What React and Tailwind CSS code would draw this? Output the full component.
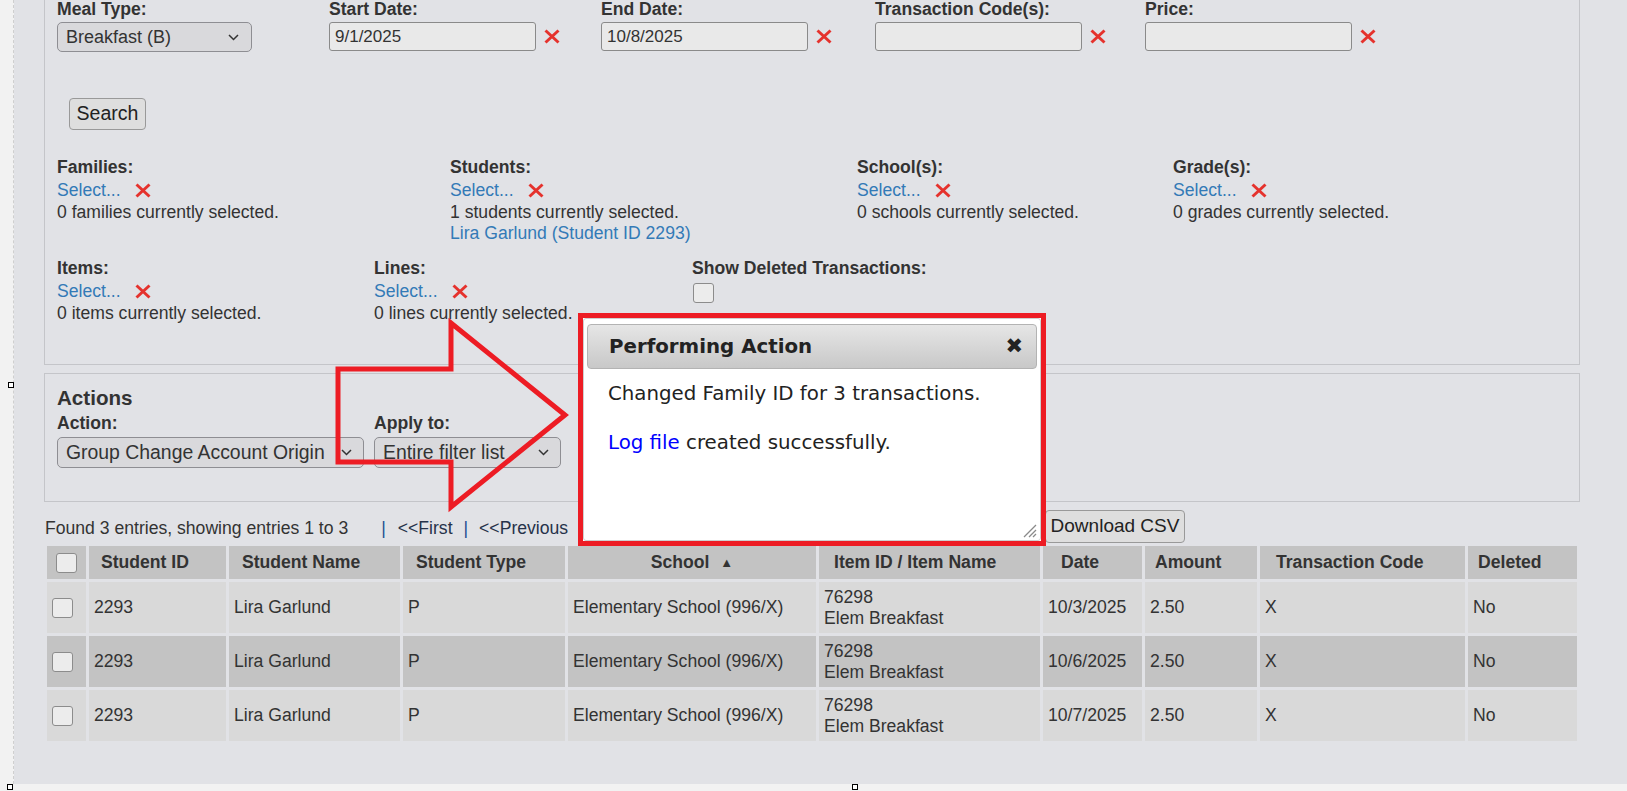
import React from 'react';

const RedX = () => (
  <svg width="18" height="15" viewBox="0 0 18 15" className="shrink-0">
    <path d="M2.5 1.5 L15.5 13.5 M15.5 1.5 L2.5 13.5" stroke="#e5322d" strokeWidth="3" fill="none" />
  </svg>
);

const Chevron = () => (
  <svg width="11" height="7" viewBox="0 0 11 7" className="shrink-0">
    <path d="M1 1 L5.5 5.5 L10 1" stroke="#333" strokeWidth="1.5" fill="none" />
  </svg>
);

const Box = ({ className = '' }) => (
  <span className={`block h-[20px] w-[21px] rounded-[3px] border border-[#8c8c8c] bg-[#ececec] ${className}`} />
);

function DateField({ label, value, width }) {
  return (
    <div className={width}>
      <div className="font-bold leading-[19px]">{label}</div>
      <div className="mt-[3px] flex items-center gap-[7px]">
        <div className="flex h-[29px] w-[207px] items-center rounded-[3px] border border-[#8a8a8a] bg-[#e9e9e9] pl-[5px] text-[17px]">
          {value}
        </div>
        <RedX />
      </div>
    </div>
  );
}

function Picker({ label, status, extra, width }) {
  return (
    <div className={width}>
      <div className="font-bold leading-[21px]">{label}</div>
      <div className="flex h-[24px] items-center gap-[13px]">
        <span className="text-[#337ab7]">Select...</span>
        <RedX />
      </div>
      <div className="leading-[21px]">{status}</div>
      {extra && <div className="leading-[21px] text-[#337ab7]">{extra}</div>}
    </div>
  );
}

export default function App() {
  const rows = [
    { date: '10/3/2025', bg: 'bg-[#d9d9d9]' },
    { date: '10/6/2025', bg: 'bg-[#c3c3c3]' },
    { date: '10/7/2025', bg: 'bg-[#d9d9d9]' },
  ];

  return (
    <div className="relative h-[791px] w-[1627px] overflow-hidden bg-[#f2f2f2] font-['Liberation_Sans',Arial,sans-serif] text-[17.6px] text-[#333]">
      <div className="flex h-[784px]">
        {/* left gutter */}
        <div className="w-[14px] shrink-0 border-r border-dashed border-[#cfcfcf] bg-[#f2f2f2]" />

        <main className="flex-1 bg-[#e1e2e6] pl-[30px] pr-[47px]">
          {/* Filters panel */}
          <section className="border-x border-b border-[#c4c5c9] pb-[40px] pl-[12px]">
            <div className="flex">
              <div className="w-[272px]">
                <div className="font-bold leading-[19px]">Meal Type:</div>
                <div className="mt-[3px] flex h-[30px] w-[195px] items-center justify-between rounded-[5px] border border-[#8e8e93] bg-[#d9d9dc] pl-[8px] pr-[12px] text-[18px]">
                  Breakfast (B)
                  <Chevron />
                </div>
              </div>
              <DateField label="Start Date:" value="9/1/2025" width="w-[272px]" />
              <DateField label="End Date:" value="10/8/2025" width="w-[274px]" />
              <DateField label="Transaction Code(s):" value="" width="w-[270px]" />
              <DateField label="Price:" value="" width="w-[270px]" />
            </div>

            <button className="ml-[12px] mt-[46px] h-[32px] w-[77px] rounded-[4px] border border-[#999] bg-[#dedede] text-[19.5px] text-[#222]">
              Search
            </button>

            <div className="mt-[27px] flex">
              <Picker width="w-[393px]" label="Families:" status="0 families currently selected." />
              <Picker
                width="w-[407px]"
                label="Students:"
                status="1 students currently selected."
                extra="Lira Garlund (Student ID 2293)"
              />
              <Picker width="w-[316px]" label="School(s):" status="0 schools currently selected." />
              <Picker width="w-[300px]" label="Grade(s):" status="0 grades currently selected." />
            </div>

            <div className="mt-[14px] flex">
              <Picker width="w-[317px]" label="Items:" status="0 items currently selected." />
              <Picker width="w-[318px]" label="Lines:" status="0 lines currently selected." />
              <div>
                <div className="font-bold leading-[21px]">Show Deleted Transactions:</div>
                <Box className="ml-px mt-[4px] w-[20px]" />
              </div>
            </div>
          </section>

          {/* Actions panel */}
          <section className="mt-[8px] border border-[#c4c5c9] pb-[33px] pl-[12px] pt-[12px]">
            <h3 className="text-[20.6px] font-bold leading-[24px]">Actions</h3>
            <div className="mt-[3px] flex gap-[10px]">
              <div>
                <div className="font-bold leading-[20px]">Action:</div>
                <div className="mt-[4px] flex h-[31px] w-[307px] items-center justify-between overflow-hidden rounded-[5px] border border-[#8e8e93] bg-[#d9d9dc] pl-[8px] pr-[11px] text-[19.4px]">
                  <span className="whitespace-nowrap">Group Change Account Origin</span>
                  <Chevron />
                </div>
              </div>
              <div>
                <div className="font-bold leading-[20px]">Apply to:</div>
                <div className="mt-[4px] flex h-[31px] w-[187px] items-center justify-between rounded-[5px] border border-[#8e8e93] bg-[#d9d9dc] pl-[8px] pr-[11px] text-[19.4px]">
                  <span className="whitespace-nowrap">Entire filter list</span>
                  <Chevron />
                </div>
              </div>
            </div>
          </section>

          {/* Results bar */}
          <div className="mt-[8px] flex h-[33px] items-center">
            <div className="flex w-[1001px] items-center whitespace-nowrap pl-px pt-[3px]">
              <span>Found 3 entries, showing entries 1 to 3</span>
              <span className="ml-[33px] text-[#1d4f91]">|</span>
              <span className="ml-[12px] text-[#26324a]">&lt;&lt;First</span>
              <span className="ml-[11px] text-[#1d4f91]">|</span>
              <span className="ml-[11px] text-[#26324a]">&lt;&lt;Previous</span>
              <span className="ml-[10px] text-[#1d4f91]">|</span>
              <span className="ml-[11px] text-[#26324a]">Next&gt;&gt;</span>
              <span className="ml-[10px] text-[#1d4f91]">|</span>
              <span className="ml-[11px] text-[#26324a]">Last&gt;&gt;</span>
            </div>
            <button className="h-[33px] w-[140px] rounded-[4px] border border-[#999] bg-[#dedede] text-[19px] text-[#222]">
              Download CSV
            </button>
          </div>

          {/* Results table */}
          <table className="w-[1536px] table-fixed border-separate border-spacing-[3px] text-left">
            <thead>
              <tr className="h-[33px] font-bold">
                <th className="w-[39px] bg-[#c3c3c3] pl-[9px]"><Box className="w-[20px]" /></th>
                <th className="w-[137px] bg-[#c3c3c3] pl-[12px]">Student ID</th>
                <th className="w-[171px] bg-[#c3c3c3] pl-[13px]">Student Name</th>
                <th className="w-[162px] bg-[#c3c3c3] pl-[13px]">Student Type</th>
                <th className="w-[248px] bg-[#c3c3c3] text-center">
                  School <span className="ml-[6px] align-[1px] text-[13px]">▲</span>
                </th>
                <th className="w-[221px] bg-[#c3c3c3] pl-[15px]">Item ID / Item Name</th>
                <th className="w-[99px] bg-[#c3c3c3] pl-[18px]">Date</th>
                <th className="w-[112px] bg-[#c3c3c3] pl-[10px]">Amount</th>
                <th className="w-[205px] bg-[#c3c3c3] pl-[16px]">Transaction Code</th>
                <th className="w-[109px] bg-[#c3c3c3] pl-[10px]">Deleted</th>
              </tr>
            </thead>
            <tbody>
              {rows.map((r, i) => (
                <tr key={i} className="h-[51px]">
                  <td className={`${r.bg} pl-[5px]`}><Box /></td>
                  <td className={`${r.bg} px-[5px]`}>2293</td>
                  <td className={`${r.bg} px-[5px]`}>Lira Garlund</td>
                  <td className={`${r.bg} px-[5px]`}>P</td>
                  <td className={`${r.bg} px-[5px]`}>Elementary School (996/X)</td>
                  <td className={`${r.bg} px-[5px] leading-[21px]`}>76298<br />Elem Breakfast</td>
                  <td className={`${r.bg} px-[5px]`}>{r.date}</td>
                  <td className={`${r.bg} px-[5px]`}>2.50</td>
                  <td className={`${r.bg} px-[5px]`}>X</td>
                  <td className={`${r.bg} px-[5px]`}>No</td>
                </tr>
              ))}
            </tbody>
          </table>
        </main>
      </div>

      {/* annotation arrow */}
      <svg className="pointer-events-none absolute left-0 top-0" width="1627" height="791">
        <polygon
          points="338,369 451,369 451,323 565,415 451,507 451,462 338,462"
          fill="none"
          stroke="#ed1c24"
          strokeWidth="5"
          strokeLinejoin="miter"
        />
      </svg>

      {/* dialog with red highlight */}
      <div className="absolute left-[578px] top-[313px] h-[233px] w-[468px] border-[5px] border-[#ed1c24] bg-white">
        <div className="relative h-full rounded-[3px] border border-[#cfcfcf] bg-white px-[3px] pt-[5px] font-['DejaVu_Sans',Verdana,sans-serif] text-[#222]">
          <div className="flex h-[45px] items-center justify-between rounded-[4px] border border-[#b3b3b3] bg-gradient-to-b from-[#e6e6e6] to-[#c8c8c8] pl-[21px] pr-[13px]">
            <span className="text-[19.8px] font-bold">Performing Action</span>
            <span className="text-[21px] font-bold leading-none">✖</span>
          </div>
          <div className="pl-[21px] pt-[13px] text-[19.8px] leading-[24px]">
            <div>Changed Family ID for 3 transactions.</div>
            <div className="mt-[25px]">
              <span className="text-[#0000ff]">Log file</span> created successfully.
            </div>
          </div>
          <svg className="absolute bottom-[2px] right-[3px]" width="16" height="16" viewBox="0 0 16 16">
            <path d="M15 3 L3 15 M15 8 L8 15 M15 12 L12 15" stroke="#8a8a8a" strokeWidth="1.3" />
          </svg>
        </div>
      </div>

      {/* selection handles */}
      <span className="absolute left-[8px] top-[382px] h-[6px] w-[6px] border border-black bg-white" />
      <span className="absolute left-[7px] top-[784px] h-[6px] w-[6px] border border-black bg-white" />
      <span className="absolute left-[852px] top-[784px] h-[6px] w-[6px] border border-black bg-white" />
    </div>
  );
}
